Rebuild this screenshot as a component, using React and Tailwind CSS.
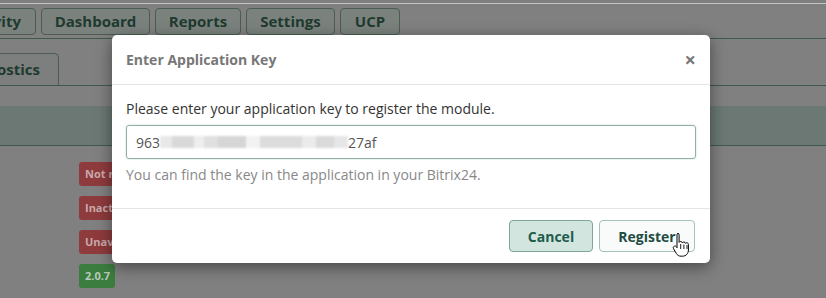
import React from "react";

function Tab({ children, className = "" }) {
  return (
    <div
      className={
        "h-[27px] flex items-center rounded-[4px] border border-[#4b5d53] bg-[#7b827e] text-[15px] font-bold text-[#1f3a2f] " +
        className
      }
    >
      {children}
    </div>
  );
}

function Badge({ children, green }) {
  return (
    <div
      className={
        "h-[24px] rounded-[3px] px-[6px] flex items-center text-[11px] font-bold whitespace-nowrap overflow-hidden " +
        (green ? "w-[36px] bg-[#3a7d3f] text-[#b9c9b9]" : "w-[40px] bg-[#8e3b3d] text-[#c9a9aa]")
      }
    >
      {children}
    </div>
  );
}

function Cursor() {
  return (
    <svg width="20" height="26" viewBox="0 0 20 26" className="absolute left-[672px] top-[232px]">
      <path
        d="M5.5 1.5c1 0 1.6.7 1.6 1.6v7.3c.3-.6.9-.9 1.6-.9.9 0 1.5.6 1.6 1.3.3-.5.9-.8 1.5-.8.9 0 1.5.6 1.6 1.3.3-.4.8-.6 1.3-.6 1 0 1.7.8 1.7 1.8v5.5c0 3.3-2.2 6.2-6 6.2h-1.3c-2.3 0-3.6-1-4.8-2.8L1.6 16.8c-.6-.9-.4-2 .4-2.5.8-.5 1.8-.3 2.4.5l.6.9V3.1c0-.9.6-1.6 1.5-1.6z"
        fill="#fff"
        stroke="#000"
        strokeWidth="1"
        strokeLinejoin="round"
      />
      <path d="M8.7 12v5M11.9 12.5v4.5M15 13v4" stroke="#000" strokeWidth="0.9" />
    </svg>
  );
}

export default function App() {
  return (
    <div
      className="relative w-[826px] h-[298px] overflow-hidden bg-[#808080]"
      style={{ fontFamily: '"Open Sans", "Noto Sans", sans-serif' }}
    >
      {/* background page */}
      <div className="h-[3px] bg-[#7f7f7f]" />
      <div className="h-px bg-[#c3c7c4]" />
      <div className="h-[35px] border-b border-[#3f5a4b] flex items-start gap-[5px] pt-[4px] ml-[-60px]">
        <Tab className="w-[96px] justify-end pr-[14px]">Activity</Tab>
        <Tab className="w-[109px] justify-center">Dashboard</Tab>
        <Tab className="w-[86px] justify-center">Reports</Tab>
        <Tab className="w-[89px] justify-center">Settings</Tab>
        <Tab className="w-[60px] justify-center">UCP</Tab>
      </div>
      <div className="h-[47px] border-b border-[#3f5a4b] flex items-end ml-[-60px]">
        <div className="h-[32px] w-[119px] rounded-t-[5px] border border-b-0 border-[#4b5d53] bg-[#7d7f7e] flex items-center justify-end pr-[18px] text-[15px] font-bold text-[#1f3a2f]">
          Diagnostics
        </div>
      </div>
      <div className="mt-[20px] h-[40px] bg-[#6b7873] border-b border-[#3f5a4b]" />
      <div className="flex flex-col gap-[10px] pl-[79px] pt-[16px]">
        <Badge>Not req</Badge>
        <Badge>Inactive</Badge>
        <Badge>Unavail</Badge>
        <Badge green>2.0.7</Badge>
      </div>

      {/* modal */}
      <div className="absolute left-[112px] top-[35px] w-[598px] h-[228px] bg-white rounded-[5px] shadow-[0_4px_16px_rgba(0,0,0,0.45)] flex flex-col">
        <div className="h-[50px] border-b border-[#e5e5e5] flex items-center justify-between pl-[14px] pr-[14px]">
          <div className="text-[14px] font-bold text-[#777]">Enter Application Key</div>
          <div className="text-[20px] font-bold leading-none text-[#777]">×</div>
        </div>
        <div className="h-[124px] border-b border-[#e5e5e5] px-[14px] pt-[14px]">
          <div className="text-[14px] text-[#333] leading-[20px]">
            Please enter your application key to register the module.
          </div>
          <div className="mt-[6px] h-[34px] rounded-[3px] border border-[#8fb3a3] shadow-[0_0_2px_rgba(95,150,125,0.4)] flex items-center px-[9px] text-[14px] text-[#555]">
            <span>963</span>
            <span className="flex items-center h-[12px] w-[188px] gap-0 blur-[1px]">
              <span className="h-full w-[12px] bg-[#e8e8e8]" />
              <span className="h-full w-[22px] bg-[#d9d9d9]" />
              <span className="h-full w-[10px] bg-[#eeeeee]" />
              <span className="h-full w-[14px] bg-[#e0e0e0]" />
              <span className="h-full w-[28px] bg-[#d6d6d6]" />
              <span className="h-full w-[14px] bg-[#f2f2f2]" />
              <span className="h-full w-[42px] bg-[#dcdcdc]" />
              <span className="h-full w-[14px] bg-[#ebebeb]" />
              <span className="h-full w-[18px] bg-[#dadada]" />
              <span className="h-full w-[14px] bg-[#e6e6e6]" />
            </span>
            <span>27af</span>
          </div>
          <div className="mt-[6px] text-[14px] text-[#888] leading-[20px]">
            You can find the key in the application in your Bitrix24.
          </div>
        </div>
        <div className="flex-1 flex items-center justify-end gap-[6px] pr-[15px]">
          <button className="h-[32px] w-[84px] rounded-[4px] border border-[#7ea797] bg-[#d2e6df] text-[14px] font-bold text-[#1f5b4c]">
            Cancel
          </button>
          <button className="h-[32px] w-[96px] rounded-[4px] border border-[#a3c3b7] bg-[#f8fbfa] text-[14px] font-bold text-[#1f4c42]">
            Register
          </button>
        </div>
      </div>
      <Cursor />
    </div>
  );
}
